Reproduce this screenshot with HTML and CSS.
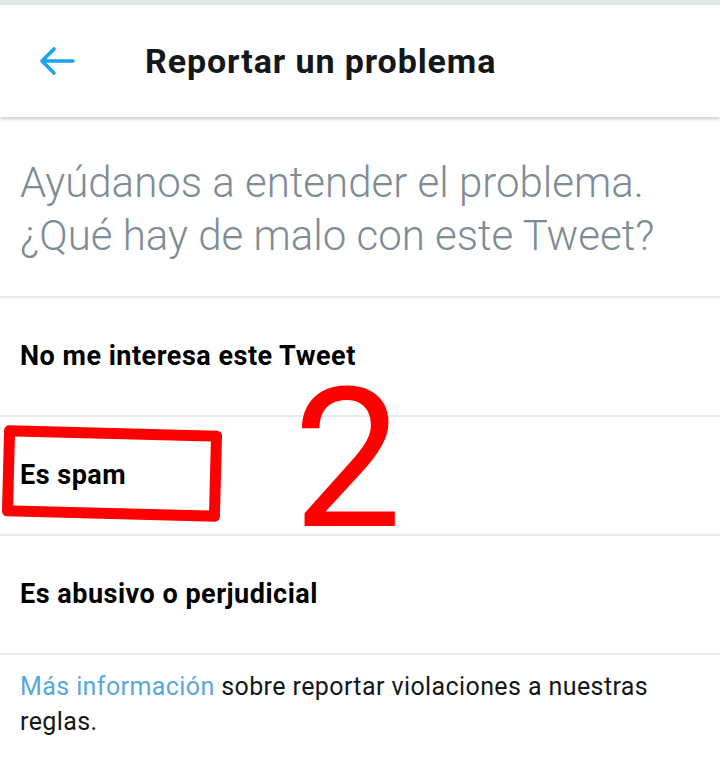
FILE: index.html
```html
<!DOCTYPE html>
<html lang="es">
<head>
  <meta charset="UTF-8" />
  <meta name="viewport" content="width=device-width, initial-scale=1.0" />
  <title>Reportar un problema</title>
  <link rel="stylesheet" href="styles.css">
</head>
<body>
  <div class="statusbar"></div>

  <header>
    <a class="back" href="#">
      <svg width="36" height="30" viewBox="0 0 36 30">
        <path d="M34 15H3M15 3L3 15l12 12" fill="none" stroke="#1da1f2" stroke-width="3.6" stroke-linecap="round" stroke-linejoin="round"/>
      </svg>
    </a>
    <h1>Reportar un problema</h1>
  </header>

  <div class="intro">
    Ayúdanos a entender el problema.<br>
    ¿Qué hay de malo con este Tweet?
  </div>

  <ul class="options">
    <li>No me interesa este Tweet</li>
    <li class="marked">
      Es spam
      <span class="box"></span>
      <span class="step">2</span>
    </li>
    <li>Es abusivo o perjudicial</li>
  </ul>

  <p class="more">
    <a href="#">Más información</a> sobre reportar violaciones a nuestras reglas.
  </p>
</body>
</html>
```

FILE: styles.css
```css
body {
  margin: 0;
  font-family: Roboto, 'Noto Sans', sans-serif;
  background-color: #fff;
  color: #14171a;
}

.statusbar {
  height: 5px;
  background-color: #e3e7e8;
}

header {
  height: 112px;
  display: flex;
  align-items: center;
  box-shadow: 0 2px 4px rgba(0,0,0,0.22);
  position: relative;
}

.back {
  display: flex;
  margin-left: 39px;
  width: 36px;
}

header h1 {
  margin: 0 0 0 70px;
  font-size: 34px;
  font-weight: bold;
  letter-spacing: 0.9px;
  color: #14171a;
}

.intro {
  padding: 39px 20px 34px;
  font-size: 42px;
  font-weight: 300;
  line-height: 53px;
  color: #7f8c96;
  border-bottom: 2px solid #e6ecf0;
}

.options {
  list-style: none;
  margin: 0;
  padding: 0;
}

.options li {
  position: relative;
  height: 119px;
  box-sizing: border-box;
  display: flex;
  align-items: center;
  padding: 0 20px 2px;
  font-size: 27px;
  font-weight: bold;
  letter-spacing: 0.5px;
  color: #000;
  border-bottom: 2px solid #e6ecf0;
}

.box {
  position: absolute;
  left: 3px;
  top: 11px;
  width: 218px;
  height: 91px;
  box-sizing: border-box;
  border: 11px solid #f00;
  border-radius: 5px;
  transform: rotate(1.5deg);
}

.step {
  position: absolute;
  left: 293px;
  top: -54px;
  font-size: 194px;
  font-weight: 400;
  letter-spacing: 0;
  line-height: 1;
  color: #f00;
}

.more {
  margin: 0;
  padding: 14px 20px;
  font-size: 25px;
  letter-spacing: 0.4px;
  line-height: 35px;
  color: #14171a;
}

.more a {
  color: #5aa7dc;
  text-decoration: none;
}
```
